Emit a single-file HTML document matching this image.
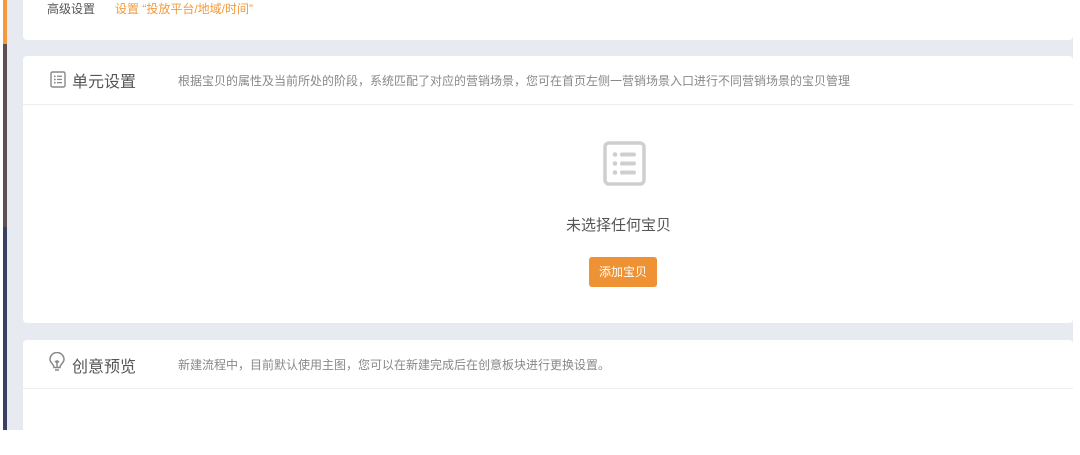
<!DOCTYPE html>
<html><head><meta charset="utf-8"><style>
*{margin:0;padding:0;box-sizing:border-box}
body{width:1080px;height:455px;background:#fff;position:relative;overflow:hidden;font-family:"Liberation Sans","Noto Sans CJK SC",sans-serif}
.bg{position:absolute;left:7px;top:0;width:1066px;height:430px;background:#e8eaf2}
.bar{position:absolute;left:3px;width:4px}
.card{position:absolute;left:23px;width:1050px;background:#fff}
.t{position:absolute;white-space:nowrap}
.h{font-size:16px;color:#555}
.d{font-size:12px;color:#888}
.line{position:absolute;left:0;right:0;height:1px;background:#eceef2}
</style></head><body>
<div class="bg"></div>
<div class="bar" style="top:0;height:44px;background:#f39a3c"></div>
<div class="bar" style="top:44px;height:183px;background:#5f5052"></div>
<div class="bar" style="top:227px;height:203px;background:#3b4063"></div>

<div class="card" style="top:0;height:40px;border-radius:0 0 4px 4px">
<div class="t" style="left:24px;top:0px;font-size:12px;color:#555">高级设置</div>
<div class="t" style="left:92px;top:0px;font-size:12px;color:#f39a3c">设置 “投放平台/地域/时间”</div>
</div>

<div class="card" style="top:56px;height:267px;border-radius:4px">
<svg style="position:absolute;left:27px;top:15px" width="16" height="17" viewBox="0 0 16 17"><rect x="1" y="1" width="14" height="15" rx="1.5" fill="none" stroke="#888" stroke-width="1.4"/><g fill="#888"><rect x="4" y="4.5" width="1.6" height="1.6"/><rect x="4" y="7.7" width="1.6" height="1.6"/><rect x="4" y="10.9" width="1.6" height="1.6"/><rect x="7" y="4.6" width="5" height="1.3"/><rect x="7" y="7.8" width="5" height="1.3"/><rect x="7" y="11" width="5" height="1.3"/></g></svg>
<div class="t h" style="left:49px;top:12px">单元设置</div>
<div class="t d" style="left:155px;top:16px">根据宝贝的属性及当前所处的阶段，系统匹配了对应的营销场景，您可在首页左侧一营销场景入口进行不同营销场景的宝贝管理</div>
<div class="line" style="top:48px"></div>
<svg style="position:absolute;left:580px;top:85px" width="43" height="45" viewBox="0 0 43 45"><rect x="2" y="2" width="39" height="41" rx="4" fill="none" stroke="#cfcfcf" stroke-width="3.5"/><g fill="#cfcfcf"><circle cx="12" cy="13.5" r="2.3"/><circle cx="12" cy="22.5" r="2.3"/><circle cx="12" cy="31.5" r="2.3"/><rect x="17" y="11.5" width="16" height="4" rx="2"/><rect x="17" y="20.5" width="16" height="4" rx="2"/><rect x="17" y="29.5" width="16" height="4" rx="2"/></g></svg>
<div class="t" style="left:543px;top:158px;font-size:15px;color:#555">未选择任何宝贝</div>
<div style="position:absolute;left:566px;top:201px;width:68px;height:30px;background:#ee9234;border-radius:3px;color:#fff;font-size:12px;line-height:30px;text-align:center">添加宝贝</div>
</div>

<div class="card" style="top:340px;height:90px;border-radius:4px 4px 0 0">
<svg style="position:absolute;left:25px;top:12px" width="18" height="21" viewBox="0 0 18 21"><path d="M6 15.5 C6 12 2 11 2 7.5 A7 7 0 0 1 16 7.5 C16 11 12 12 12 15.5 Z" fill="none" stroke="#888" stroke-width="1.5"/><path d="M7 18 H11 M9 8 V15 M7 9 L9 11 L11 9" fill="none" stroke="#888" stroke-width="1.4"/></svg>
<div class="t h" style="left:49px;top:13px">创意预览</div>
<div class="t d" style="left:155px;top:16px">新建流程中，目前默认使用主图，您可以在新建完成后在创意板块进行更换设置。</div>
<div class="line" style="top:48px"></div>
</div>
</body></html>
